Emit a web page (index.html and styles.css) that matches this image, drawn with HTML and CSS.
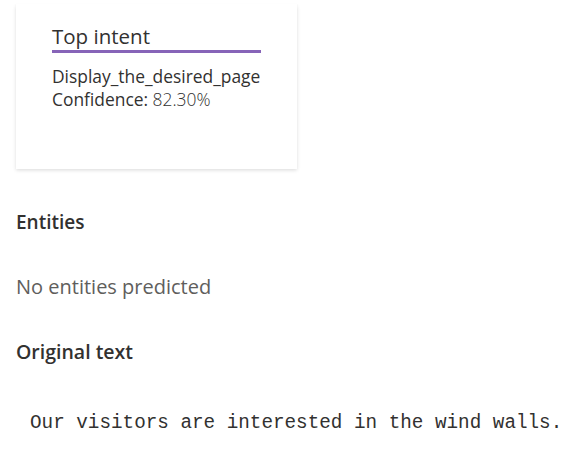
FILE: index.html
```html
<!DOCTYPE html>
<html>
<head>
<meta charset="utf-8">
<link rel="stylesheet" href="styles.css">
</head>
<body>
<div class="page">
  <div class="card">
    <div class="card-title">Top intent</div>
    <div class="intent-name">Display_the_desired_page</div>
    <div class="confidence"><span class="label">Confidence:</span> <span class="value">82.30%</span></div>
  </div>
  <h2 class="section-title entities-title">Entities</h2>
  <p class="empty">No entities predicted</p>
  <h2 class="section-title original-title">Original text</h2>
  <pre class="original">Our visitors are interested in the wind walls.</pre>
</div>
</body>
</html>
```
FILE: styles.css
```css
html, body {
  margin: 0;
  padding: 0;
  background: #ffffff;
}
body {
  font-family: "Open Sans", "Noto Sans", sans-serif;
  color: #323130;
}
.page {
  padding: 4px 0 0 16px;
}
.card {
  box-sizing: border-box;
  width: 281px;
  height: 165px;
  padding: 19px 36px 0 36px;
  background: #ffffff;
  box-shadow: 0 1.6px 3.6px rgba(0,0,0,0.132), 0 0.3px 0.9px rgba(0,0,0,0.108);
}
.card-title {
  font-size: 20.5px;
  line-height: 27px;
  border-bottom: 3px solid #8764b8;
  color: #323130;
}
.intent-name {
  margin-top: 12px;
  font-size: 17.4px;
  line-height: 23px;
  white-space: nowrap;
}
.confidence {
  font-size: 17.4px;
  line-height: 23px;
}
.confidence .value {
  font-weight: 300;
  color: #323130;
}
.section-title {
  margin: 0;
  font-size: 19px;
  line-height: 26px;
  font-weight: 600;
}
.entities-title {
  margin-top: 40px;
}
.empty {
  margin: 38px 0 0 0;
  font-size: 20px;
  line-height: 28px;
  color: #605e5c;
}
.original-title {
  margin-top: 38px;
  font-size: 19.5px;
}
.original {
  margin: 46px 0 0 14px;
  font-family: "Liberation Mono", monospace;
  font-size: 19.3px;
  line-height: 24px;
  color: #323130;
}
```
